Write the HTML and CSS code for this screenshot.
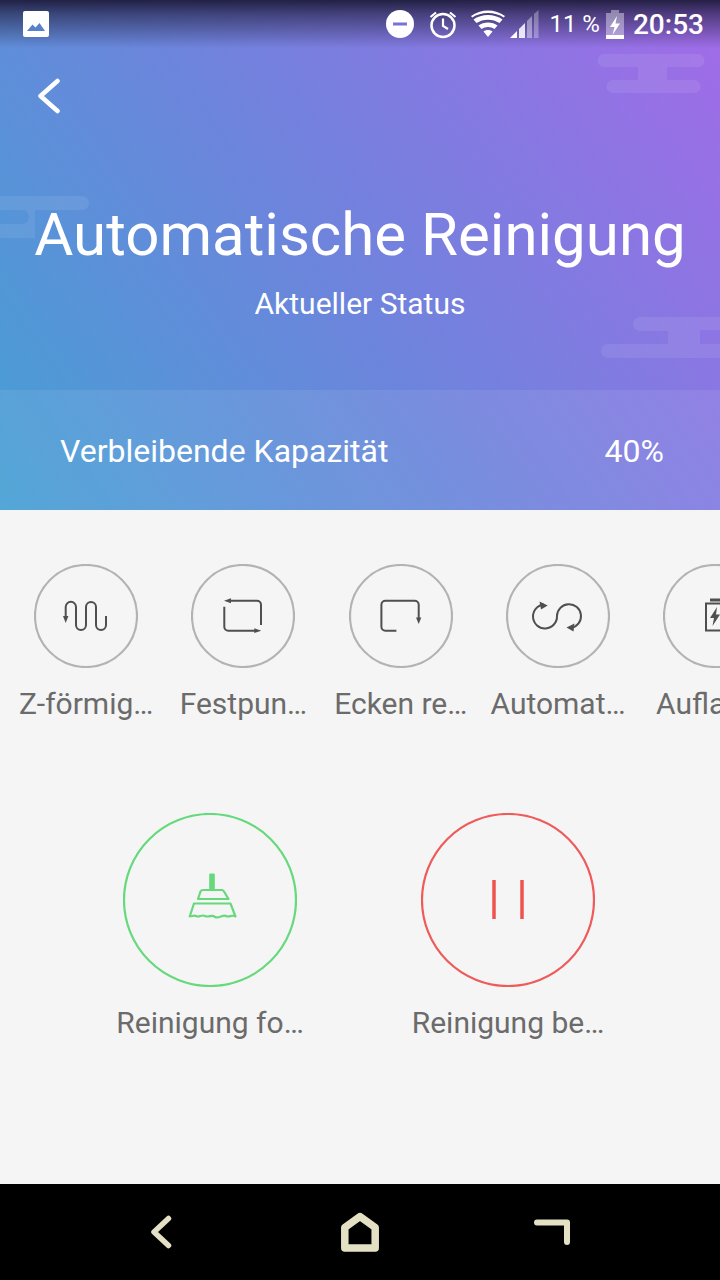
FILE: index.html
```html
<!DOCTYPE html>
<html>
<head>
	<meta charset="utf-8">
	<title>Automatische Reinigung</title>
	<link rel="stylesheet" href="styles.css">
</head>
<body>
	<div class="screen">
		<div class="header">
			<svg class="cloud cloud-top" width="110" height="42" viewBox="0 0 110 42"><path d="M7 1H101a6.500 6.500 0 0 1 0 13H70V27H97a6.500 6.500 0 0 1 0 13H16a6.500 6.500 0 0 1 0-13H41V14H7A6.500 6.500 0 0 1 7 1Z"/></svg>
			<svg class="cloud cloud-left" width="90" height="44" viewBox="0 0 90 44"><path d="M0 0H82a7 7 0 0 1 0 14H35V42H0V28H22a7 7 0 0 0 0-14H0Z"/></svg>
			<svg class="cloud cloud-right" width="120" height="44" viewBox="0 0 120 44"><path d="M40 1H120V14H100V28H120V42H8a7 7 0 0 1 0-14H68V15H40a7 7 0 0 1 0-14Z"/></svg>

			<div class="statusbar">
				<svg class="st-picture" width="26" height="26" viewBox="0 0 26 26"><path d="M2 0H24a2 2 0 0 1 2 2V24a2 2 0 0 1-2 2H2a2 2 0 0 1-2-2V2a2 2 0 0 1 2-2Z" fill="#fff"/><path d="M4 20L9.500 13.500L12.500 16.500L16.500 12L22 20Z" fill="#5a80cc"/></svg>
				<div class="status-right">
					<svg width="28" height="28" viewBox="0 0 28 28"><circle cx="14" cy="14" r="14" fill="#fff"/><rect x="7" y="12.500" width="14" height="3" fill="#7b72d8"/></svg>
					<svg class="st-alarm" width="30" height="30" viewBox="0 0 30 30" fill="none" stroke="#fff"><circle cx="15" cy="16.500" r="11.500" stroke-width="2.500"/><path d="M15 9.500V17L20 20M2.500 8L8 3.500M27.500 8L22 3.500" stroke-width="2.200"/></svg>
					<svg class="st-wifi" width="34" height="28" viewBox="0 0 34 28"><path d="M17 27L12.500 21.500C15 19.500 19 19.500 21.500 21.500ZM10.500 19L7.500 15.500C12.500 11.500 21.500 11.500 26.500 15.500L23.500 19C20 16.300 14 16.300 10.500 19ZM5.500 13L2.500 9.500C10.500 3.500 23.500 3.500 31.500 9.500L28.500 13C22 8.500 12 8.500 5.500 13ZM1.200 7.500L0 6C9.500-1.500 24.500-1.500 34 6L32.800 7.500C24 1.500 10 1.500 1.200 7.500Z" fill="#fff"/></svg>
					<svg class="st-signal" width="29" height="29" viewBox="0 0 29 29"><path d="M0 28L7 21V28Z" fill="#fff"/><path d="M9 19L15 13V28H9Z" fill="#fff" opacity=".85"/><path d="M17 11L22 6V28H17Z" fill="#fff" opacity=".4"/><path d="M24 4L28.500 0V28H24Z" fill="#fff" opacity=".3"/></svg>
					<span class="st-percent">11 %</span>
					<svg class="st-battery" width="18" height="29" viewBox="0 0 18 29"><path d="M5 0H13V3H18V29H0V3H5Z" fill="#fff" opacity=".4"/><rect y="25" width="18" height="4" fill="#fff"/><path d="M11 6L4 17H8.500L6.500 25L14 13.500H9.500Z" fill="#fff"/></svg>
					<span class="st-time">20:53</span>
				</div>
			</div>

			<div class="backrow">
				<svg width="24" height="36" viewBox="0 0 24 36" fill="none" stroke="#fff" stroke-width="4.500" stroke-linecap="round" stroke-linejoin="round"><path d="M20.500 3L3.500 18L20.500 33"/></svg>
			</div>

			<h1 class="title">Automatische Reinigung</h1>
			<div class="subtitle">Aktueller Status</div>

			<div class="capacity">
				<span>Verbleibende Kapazität</span>
				<span>40%</span>
			</div>
		</div>

		<div class="content">
			<div class="modes">
				<div class="mode">
					<svg class="mode-circle" width="104" height="104" viewBox="0 0 104 104"><circle cx="52" cy="52" r="51" class="ring"/><path class="line" d="M31.700 52V43a5.150 5.150 0 0 1 10.300 0V61a5 5 0 0 0 10 0V43a5 5 0 0 1 10 0V61a5 5 0 0 0 10 0V52"/><path class="head" d="M29 52H34.400L31.700 59Z"/></svg>
					<div class="mode-name">Z-förmig…</div>
				</div>
				<div class="mode">
					<svg class="mode-circle" width="104" height="104" viewBox="0 0 104 104"><circle cx="52" cy="52" r="51" class="ring"/><path class="line" d="M38 36.700H66a4 4 0 0 1 4 4V61M33.300 42.700V62.700a4 4 0 0 0 4 4H64"/><path class="head" d="M33 36.700L40 34.300V39.200ZM70.300 66.700L63.300 64.300V69Z"/></svg>
					<div class="mode-name">Festpun…</div>
				</div>
				<div class="mode">
					<svg class="mode-circle" width="104" height="104" viewBox="0 0 104 104"><circle cx="52" cy="52" r="51" class="ring"/><path class="line" d="M47.400 66.700H36.400a4 4 0 0 1-4-4V40.700a4 4 0 0 1 4-4H65.700a4 4 0 0 1 4 4V54"/><path class="head" d="M67 53.500H72.300L69.700 60Z"/></svg>
					<div class="mode-name">Ecken re…</div>
				</div>
				<div class="mode">
					<svg class="mode-circle" width="104" height="104" viewBox="0 0 104 104"><circle cx="52" cy="52" r="51" class="ring"/><path class="line" d="M38 40.500A12 12 0 1 0 51 52A12 12 0 1 1 65 64"/><path class="head" d="M41.700 41.500L33.500 37.500L35 45.500ZM60.500 63.500L68.500 59.500L67.500 67.500Z"/></svg>
					<div class="mode-name">Automat…</div>
				</div>
				<div class="mode">
					<svg class="mode-circle" width="104" height="104" viewBox="0 0 104 104"><circle cx="52" cy="52" r="51" class="ring"/><path class="line" d="M43 39.500H61V66.500H43Z"/><path class="head" d="M47 34.500H57V37.500H47ZM54 43L47 54H51L49.500 62L57 50.500H53Z"/></svg>
					<div class="mode-name">Aufladen</div>
				</div>
			</div>

			<div class="actions">
				<div class="action">
					<svg width="174" height="174" viewBox="0 0 174 174" fill="none"><circle cx="87" cy="87" r="86" stroke="#66d97c" stroke-width="2.200"/><path d="M87.200 61.500H90.800V75.500H87.200Z" stroke="#66d97c" stroke-width="2" stroke-linejoin="round" fill="#66d97c"/><path d="M75 86H105.500L101 78.500A3 3 0 0 0 99 77H80A3 3 0 0 0 77.500 78.500ZM71 90.500H107.500L112.500 103.500C109 101 106 105 103 103C100 101 96 106 92 104C89 101 86 105 82 103C79 101 76 105 73 103C71 102 69 103.500 66.700 103.500Z" stroke="#66d97c" stroke-width="2.200" stroke-linejoin="round"/></svg>
					<div class="action-name">Reinigung fo…</div>
				</div>
				<div class="action">
					<svg width="174" height="174" viewBox="0 0 174 174" fill="none"><circle cx="87" cy="87" r="86" stroke="#ef5a5a" stroke-width="2.200"/><path d="M73 67V106M101 67V106" stroke="#ef5350" stroke-width="3.500"/></svg>
					<div class="action-name">Reinigung be…</div>
				</div>
			</div>
		</div>

		<div class="navbar">
			<svg class="nav-back" width="22" height="34" viewBox="0 0 22 34" fill="none" stroke="#e4e0c3" stroke-width="5.500" stroke-linecap="round" stroke-linejoin="round"><path d="M18.500 3.500L4 17L18.500 30.500"/></svg>
			<svg class="nav-home" width="38" height="40" viewBox="0 0 38 40" fill="none" stroke="#e4e0c3" stroke-width="7.500" stroke-linejoin="round"><path d="M19 4.500L34.200 15.500V36H3.800V15.500Z"/></svg>
			<svg class="nav-recent" width="36" height="26" viewBox="0 0 36 26" fill="none" stroke="#e4e0c3" stroke-width="6" stroke-linecap="round" stroke-linejoin="round"><path d="M3 3.500H33V23"/></svg>
		</div>
	</div>
</body>
</html>
```

FILE: styles.css
```css
* {
	box-sizing: border-box;
}

body {
	margin: 0;
	font-family: Roboto, "Liberation Sans", sans-serif;
	background-color: #000;
}

.screen {
	display: flex;
	flex-direction: column;
	width: 720px;
	height: 1280px;
	overflow: hidden;
}

/* top blue-purple part */
.header {
	position: relative;
	display: flex;
	flex-direction: column;
	height: 510px;
	color: #fff;
	background: linear-gradient(55deg, #45a0d4 0%, #6c85dc 45%, #a26be8 100%);
}

.cloud {
	position: absolute;
	fill: #fff;
	opacity: .08;
}

.cloud-top {
	top: 53px;
	left: 597px;
}

.cloud-left {
	top: 196px;
	left: 0;
}

.cloud-right {
	top: 316px;
	left: 600px;
}

.statusbar {
	position: relative;
	display: flex;
	align-items: center;
	justify-content: space-between;
	height: 48px;
	padding: 0 16px 0 23px;
	background: linear-gradient(180deg, rgba(30, 28, 60, .95) 0%, rgba(30, 28, 60, .6) 30%, rgba(30, 28, 60, 0) 100%);
}

.status-right {
	display: flex;
	align-items: center;
}

.st-alarm {
	margin-left: 14px;
}

.st-wifi {
	margin-left: 13px;
}

.st-signal {
	margin-left: 5px;
}

.st-percent {
	margin-left: 10px;
	font-size: 24px;
}

.st-battery {
	margin-left: 6px;
}

.st-time {
	margin-left: 9px;
	font-size: 28px;
	font-weight: 500;
}

.backrow {
	position: relative;
	height: 36px;
	margin-top: 30px;
	padding-left: 37px;
}

.title {
	position: relative;
	margin: 84px 0 0 0;
	font-size: 60px;
	font-weight: 400;
	line-height: 74px;
	text-align: center;
}

.subtitle {
	position: relative;
	margin-top: 14px;
	font-size: 30px;
	line-height: 36px;
	text-align: center;
}

.capacity {
	display: flex;
	align-items: center;
	justify-content: space-between;
	height: 120px;
	margin-top: auto;
	padding: 2px 56px 0 60px;
	font-size: 32px;
	background-color: rgba(255, 255, 255, .08);
}

/* white part */
.content {
	flex-grow: 1;
	background-color: #f5f5f5;
}

.modes {
	display: flex;
	padding: 54px 0 0 7.5px;
}

.mode {
	flex: 0 0 157.3px;
	display: flex;
	flex-direction: column;
	align-items: center;
}

.mode-circle .ring {
	fill: none;
	stroke: #b3b3b3;
	stroke-width: 2.200;
}

.mode-circle .line {
	fill: none;
	stroke: #4f4f4f;
	stroke-width: 2;
}

.mode-circle .head {
	fill: #4f4f4f;
}

.mode-name {
	margin-top: 17px;
	color: #6b6b6b;
	font-size: 30px;
	line-height: 38px;
	text-align: center;
	white-space: nowrap;
}

.actions {
	display: flex;
	padding: 90px 0 0 123px;
	gap: 124px;
}

.action {
	display: flex;
	flex-direction: column;
	align-items: center;
	width: 174px;
}

.action svg {
	flex-shrink: 0;
}

.action-name {
	margin-top: 17px;
	color: #6b6b6b;
	font-size: 30px;
	line-height: 38px;
	text-align: center;
	white-space: nowrap;
}

.navbar {
	display: flex;
	align-items: center;
	height: 96px;
	padding-left: 150px;
	background-color: #000;
}

.nav-home {
	margin-left: 169px;
}

.nav-recent {
	margin-left: 155px;
}
```
